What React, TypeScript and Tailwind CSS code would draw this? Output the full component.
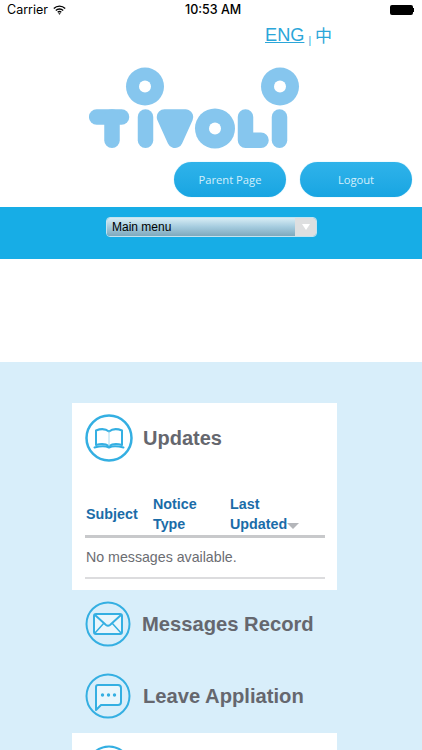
import React from 'react';

const TivoliLogo = () => (
  <svg width="212" height="84" viewBox="0 0 212 84" className="block">
    <g fill="#86c6ee">
      <circle cx="56" cy="19.500" r="19" />
      <circle cx="191" cy="19.500" r="19" />
    </g>
    <g fill="#ffffff">
      <circle cx="56" cy="19.500" r="6" />
      <circle cx="191" cy="19.500" r="6" />
    </g>
    <g stroke="#86c6ee" strokeWidth="15.500" strokeLinecap="round" strokeLinejoin="round" fill="none">
      <path d="M7.700 50H32.500" />
      <path d="M23 50V73.300" />
      <path d="M56.500 50V73.300" />
      <path d="M75.500 50L86 73.300L96.500 50L86 50Z" fill="#86c6ee" />
      <path d="M156.500 50V73.300H172" />
      <path d="M190.500 50V73.300" />
    </g>
    <circle cx="126" cy="61.500" r="20" fill="#86c6ee" />
    <circle cx="126" cy="61.500" r="6" fill="#ffffff" />
  </svg>
);

const BookIcon = () => (
  <svg width="48" height="48" viewBox="0 0 48 48" fill="none" stroke="#34afe2">
    <circle cx="24" cy="24" r="22.500" strokeWidth="2.500" />
    <path d="M11 16.500V31C16 29.500 21 30 24 32C27 30 32 29.500 37 31V16.500C32 14.500 27 15 24 17.500C21 15 16 14.500 11 16.500Z" strokeWidth="2" strokeLinejoin="round" />
    <path d="M24 17.500V32" strokeWidth="1" stroke="#a8dcf2" />
    <path d="M9.500 33.500C15 32 21 32 24 33.500C27 32 33 32 38.500 33.500" strokeWidth="2" strokeLinecap="round" />
  </svg>
);

const MailIcon = () => (
  <svg width="46" height="46" viewBox="0 0 46 46" fill="none" stroke="#34afe2">
    <circle cx="23" cy="23" r="21.500" strokeWidth="2" />
    <rect x="9" y="13" width="28" height="20" rx="2" fill="#ffffff" fillOpacity="0.45" strokeWidth="2" />
    <path d="M10 14L21 24C22.500 25 23.500 25 25 24L36 14" strokeWidth="2" />
    <path d="M10 32L19 22M36 32L27 22" strokeWidth="1.500" />
  </svg>
);

const ChatIcon = () => (
  <svg width="46" height="46" viewBox="0 0 46 46" fill="none" stroke="#34afe2">
    <circle cx="23" cy="23" r="21.500" strokeWidth="2" />
    <path d="M13 12H33C35 12 36 13 36 15V29C36 31 35 32 33 32H16L11 37V14C11 13 12 12 13 12Z" fill="#ffffff" fillOpacity="0.45" strokeWidth="2" strokeLinejoin="round" />
    <circle cx="17.500" cy="22" r="1.700" fill="#34afe2" stroke="none" />
    <circle cx="23.500" cy="22" r="1.700" fill="#34afe2" stroke="none" />
    <circle cx="29.500" cy="22" r="1.700" fill="#34afe2" stroke="none" />
  </svg>
);

const WifiIcon = () => (
  <svg width="13" height="10" viewBox="0 0 13 10" fill="none" stroke="#000000" strokeWidth="1.400">
    <path d="M0.800 3.400C4 0.300 9 0.300 12.200 3.400" />
    <path d="M2.800 5.400C4.800 3.600 8.200 3.600 10.200 5.400" />
    <path d="M4.700 7.300C5.700 6.500 7.300 6.500 8.300 7.300" />
    <path d="M6.500 9.800L5.300 8.500C6 8 7 8 7.700 8.500Z" fill="#000000" stroke="none" />
  </svg>
);

const PillButton = ({ label }: { label: string }) => (
  <button className="w-[112px] h-[35px] pt-[1px] rounded-[18px] bg-gradient-to-b from-[#2fb3ea] to-[#17a5e2] text-[#d4effb] text-[11.200px] font-['Open_Sans',sans-serif] shadow-[0_0_1px_#7fd0f2]">
    {label}
  </button>
);

const MenuRow = ({ icon, label, gap }: { icon: React.ReactNode; label: string; gap: string }) => (
  <div className={`h-[72px] ml-[13px] flex items-center ${gap}`}>
    {icon}
    <span className="text-[20.200px] font-bold text-[#65676e] leading-none">{label}</span>
  </div>
);

export default function App() {
  return (
    <div className="w-[422px] h-[750px] overflow-hidden bg-white font-['Liberation_Sans',Arial,sans-serif]">
      {/* status bar */}
      <div className="relative h-[20px] flex items-center justify-between px-[7px] text-[12.500px] text-black font-['Inter',sans-serif]">
        <div className="flex items-center gap-[5px]">
          <span>Carrier</span>
          <WifiIcon />
        </div>
        <span className="absolute left-[185px] font-medium">10:53 AM</span>
        <div className="flex items-center mr-[1px]">
          <div className="w-[23px] h-[10px] rounded-[2px] bg-black" />
          <div className="w-[1.500px] h-[4px] bg-black" />
        </div>
      </div>

      {/* language */}
      <div className="h-[30px] pl-[265px] pt-[3px] flex items-start text-[#2ba6d9] text-[18.200px] leading-[24px]">
        <a className="underline">ENG</a>
        <span className="text-[10px] mt-[6px] mx-[4px]">|</span>
        <span className="font-['Noto_Sans_CJK_SC',sans-serif] text-[17px] text-[#2ba6d9]">中</span>
      </div>

      {/* logo */}
      <div className="pl-[89px] mt-[17px] h-[83px]">
        <TivoliLogo />
      </div>

      {/* buttons */}
      <div className="mt-[12px] pl-[174px] flex gap-[14px]">
        <PillButton label="Parent Page" />
        <PillButton label="Logout" />
      </div>

      {/* main menu bar */}
      <div className="mt-[10px] h-[52px] bg-[#17ade6] pl-[106px] pt-[10px]">
        <div className="w-[211px] h-[20px] flex rounded-[4px] overflow-hidden border border-[#c4e3ef]">
          <div className="flex-1 bg-gradient-to-b from-[#d8edf5] via-[#a4cbde] to-[#7fa9bd] pl-[5px] text-[12px] leading-[18px] text-black">
            Main menu
          </div>
          <div className="w-[21px] bg-[#dedfe0] flex items-center justify-center">
            <div className="w-0 h-0 border-l-[4px] border-r-[4px] border-t-[6px] border-l-transparent border-r-transparent border-t-white" />
          </div>
        </div>
      </div>

      <div className="h-[103px] bg-white" />

      {/* light blue content */}
      <div className="h-[388px] bg-[#d8eefa] pt-[41px] pl-[72px]">
        <div className="w-[265px] h-[187px] bg-white pl-[13px] pr-[12px]">
          <div className="h-[70px] pt-[11px] flex items-start gap-[10px]">
            <BookIcon />
            <span className="text-[20px] font-bold text-[#65676e] leading-[48px]">Updates</span>
          </div>
          <div className="flex items-end h-[65px] border-b-[3px] border-[#c8c9cb] text-[#1a6ca8] text-[14.300px] font-bold leading-[20px] pb-[1px]">
            <div className="w-[68px] pl-[1px] mb-[10px]">Subject</div>
            <div className="w-[77px]">Notice<br />Type</div>
            <div className="flex items-end">
              <span>Last<br />Updated</span>
              <div className="w-0 h-0 mb-[5px] border-l-[6px] border-r-[6px] border-t-[6px] border-l-transparent border-r-transparent border-t-[#b4b6ba]" />
            </div>
          </div>
          <div className="h-[41px] border-b-[2px] border-[#dcdcde] text-[14.200px] text-[#6b6d72] leading-[38px] pl-[1px]">
            No messages available.
          </div>
        </div>
        <div className="-mt-[2px]">
          <MenuRow icon={<MailIcon />} label="Messages Record" gap="gap-[11px]" />
          <MenuRow icon={<ChatIcon />} label="Leave Appliation" gap="gap-[12px]" />
        </div>
        <div className="w-[265px] h-[60px] bg-white pl-[14px] pt-[12px] mt-[1px]">
          <MailIcon />
        </div>
      </div>
    </div>
  );
}
